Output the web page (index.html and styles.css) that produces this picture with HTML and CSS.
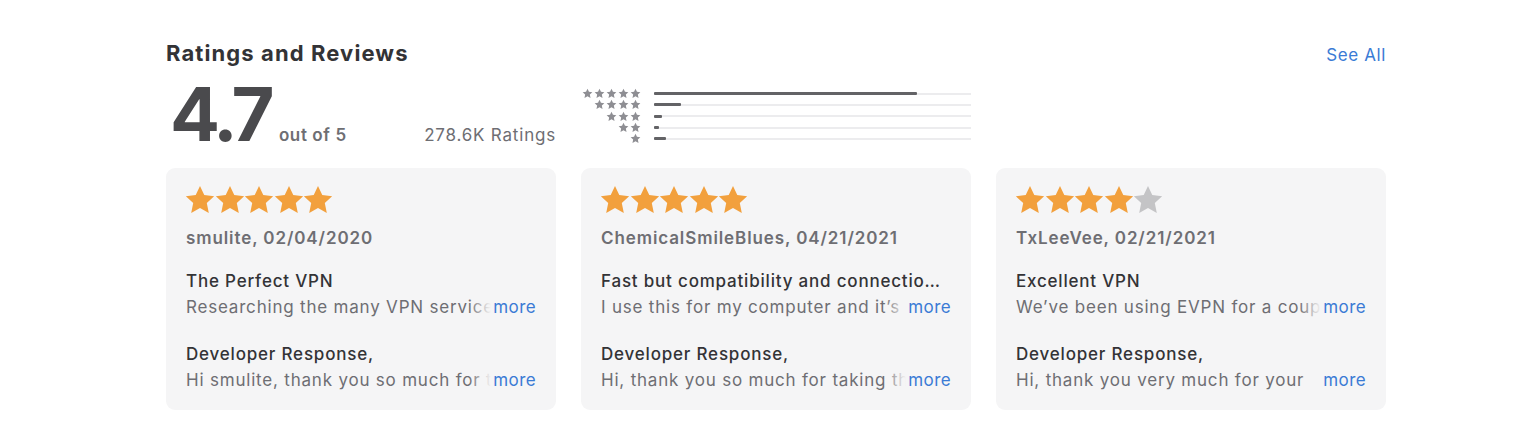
FILE: index.html
```html
<!DOCTYPE html>
<html lang="en">
<head>
    <meta charset="UTF-8">
    <meta name="viewport" content="width=device-width, initial-scale=1.0">
    <title>Ratings and Reviews</title>
    <link rel="stylesheet" href="styles.css">
</head>
<body>

    <svg width="0" height="0" class="defs">
        <defs>
            <symbol id="star" viewBox="0 0 24 24">
                <polygon points="12,1.5 15.2,8.3 22.6,9.2 17.1,14.3 18.6,21.7 12,18 5.4,21.7 6.9,14.3 1.4,9.2 8.8,8.3"/>
            </symbol>
        </defs>
    </svg>

    <section class="reviews">
        <div class="section-header">
            <h2>Ratings and Reviews</h2>
            <a href="#" class="see-all">See All</a>
        </div>

        <div class="summary">
            <div class="score">
                <span class="score-big">4.7</span>
                <span class="score-out">out of 5</span>
                <span class="score-count">278.6K Ratings</span>
            </div>
            <div class="histogram" id="histogram">
                <!-- rows filled by script -->
            </div>
        </div>

        <div class="cards" id="cards">
            <!-- cards filled by script -->
        </div>
    </section>

    <script>
        const histogram = [
            { stars: 5, pct: 83 },
            { stars: 4, pct: 8.5 },
            { stars: 3, pct: 2.6 },
            { stars: 2, pct: 1.6 },
            { stars: 1, pct: 3.8 }
        ];

        const reviews = [
            {
                rating: 5,
                user: "smulite, 02/04/2020",
                title: "The Perfect VPN",
                body: "Researching the many VPN services out there was exhausting",
                reply: "Hi smulite, thank you so much for the wonderful review"
            },
            {
                rating: 5,
                user: "ChemicalSmileBlues, 04/21/2021",
                title: "Fast but compatibility and connection issues",
                body: "I use this for my computer and it\u2019s great most of the time",
                reply: "Hi, thank you so much for taking the time to write"
            },
            {
                rating: 4,
                user: "TxLeeVee, 02/21/2021",
                title: "Excellent VPN",
                body: "We\u2019ve been using EVPN for a couple of years now",
                reply: "Hi, thank you very much for your"
            }
        ];

        function starIcons(count, cls) {
            let out = "";
            for (let i = 0; i < count; i++) {
                out += `<svg class="${cls}"><use href="#star"/></svg>`;
            }
            return out;
        }

        document.getElementById("histogram").innerHTML = histogram.map(row =>
            `<div class="hist-row">
                <div class="hist-stars">${starIcons(row.stars, "mini-star")}</div>
                <div class="hist-track"><div class="hist-fill" style="width: ${row.pct}%"></div></div>
            </div>`
        ).join("");

        document.getElementById("cards").innerHTML = reviews.map(r =>
            `<article class="card">
                <div class="card-stars">
                    ${starIcons(r.rating, "star on")}${starIcons(5 - r.rating, "star off")}
                </div>
                <div class="card-user">${r.user}</div>
                <div class="card-title">${r.title}</div>
                <div class="clip-line"><span class="clip-text">${r.body}</span><a href="#" class="more">more</a></div>
                <div class="card-title reply-head">Developer Response,</div>
                <div class="clip-line"><span class="clip-text">${r.reply}</span><a href="#" class="more">more</a></div>
            </article>`
        ).join("");
    </script>

</body>
</html>
```

FILE: styles.css
```css
body {
    margin: 0;
    font-family: Inter, "Noto Sans", sans-serif;
    background-color: white;
    color: #1d1d1f;
}

.defs {
    position: absolute;
}

.reviews {
    width: 1220px;
    padding: 39px 0 0 166px;
}

.section-header {
    display: flex;
    justify-content: space-between;
    align-items: center;
}

.section-header h2 {
    margin: 0;
    font-size: 22px;
    line-height: 28px;
    font-weight: 700;
    color: #333336;
    letter-spacing: 1.1px;
}

.see-all {
    color: #3a7bd5;
    text-decoration: none;
    font-size: 17px;
    letter-spacing: 0.6px;
    margin-top: 4px;
}

/* Score + histogram row, same columns as the cards */
.summary {
    display: grid;
    grid-template-columns: repeat(3, 1fr);
    column-gap: 25px;
    margin-top: 8px;
    height: 79px;
}

.score {
    display: flex;
    align-items: baseline;
}

.score-big {
    font-size: 74px;
    line-height: 78px;
    font-weight: 700;
    color: #4a4a4d;
    letter-spacing: -4.5px;
    margin-left: 4px;
}

.score-out {
    font-size: 17px;
    font-weight: 600;
    color: #6e6e73;
    letter-spacing: 0.6px;
    margin-left: 9px;
}

.score-count {
    font-size: 17px;
    color: #6e6e73;
    letter-spacing: 0.8px;
    margin-left: auto;
}

.histogram {
    padding-top: 13px;
}

.hist-row {
    display: flex;
    align-items: center;
    height: 11.3px;
}

.hist-stars {
    width: 60px;
    display: flex;
    justify-content: flex-end;
    gap: 1px;
}

.mini-star {
    width: 11px;
    height: 11px;
    fill: #8e8e93;
}

.hist-track {
    flex: 1;
    height: 2px;
    margin-left: 13px;
    background-color: #ececee;
    display: flex;
    align-items: center;
}

.hist-fill {
    height: 3px;
    background-color: #636366;
    border-radius: 1px;
}

/* Review cards */
.cards {
    display: grid;
    grid-template-columns: repeat(3, 1fr);
    column-gap: 25px;
    margin-top: 14px;
}

.card {
    background-color: #f5f5f6;
    border-radius: 9px;
    padding: 16px 20px 17px 20px;
    min-width: 0;
}

.card-stars {
    display: flex;
    height: 31px;
    margin-left: -2px;
}

.star {
    width: 32px;
    height: 32px;
    margin-right: -2.5px;
}

.star.on { fill: #f2a03d; }
.star.off { fill: #c4c4c6; }

.card-user {
    margin-top: 11px;
    font-size: 17px;
    line-height: 24px;
    font-weight: 600;
    color: #6e6e73;
    letter-spacing: 0.9px;
}

.card-title {
    margin-top: 18px;
    font-size: 17px;
    line-height: 26px;
    font-weight: 500;
    color: #333336;
    letter-spacing: 0.8px;
    white-space: nowrap;
    overflow: hidden;
    text-overflow: ellipsis;
}

.reply-head {
    margin-top: 21px;
}

.clip-line {
    position: relative;
    font-size: 17px;
    line-height: 26px;
    color: #6e6e73;
    letter-spacing: 0.8px;
    white-space: nowrap;
    overflow: hidden;
}

.more {
    position: absolute;
    right: 0;
    top: 0;
    padding-left: 24px;
    letter-spacing: 0.4px;
    color: #3a7bd5;
    text-decoration: none;
    background: linear-gradient(to right, rgba(245, 245, 246, 0) 0, #f5f5f6 22px);
}
```
